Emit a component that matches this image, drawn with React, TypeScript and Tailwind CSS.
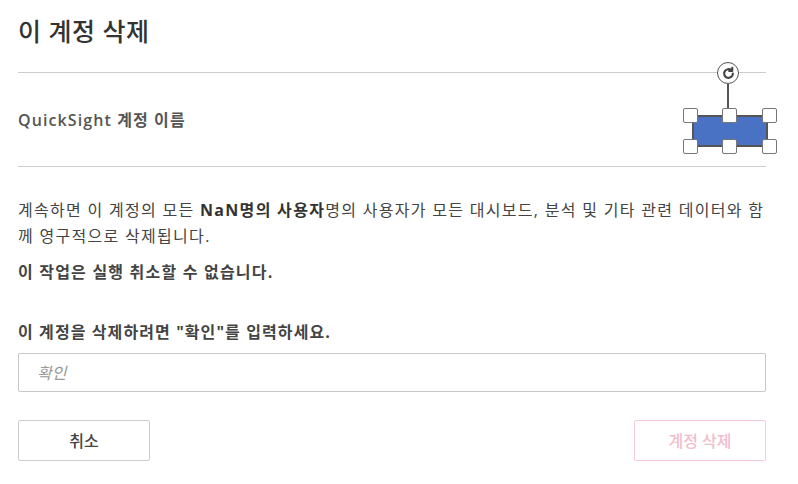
import React from 'react';

const font = { fontFamily: '"Open Sans", "Noto Sans CJK KR", sans-serif' };

const Handle: React.FC<{ className: string }> = ({ className }) => (
  <div className={`absolute w-[15px] h-[15px] bg-white border border-[#777] rounded-[2px] ${className}`} />
);

// selected shape overlay (rotate knob + resize handles)
const ShapeWidget: React.FC = () => (
  <div className="absolute left-[683px] top-[62px] w-[94px] h-[92px]">
    <div className="absolute left-[34px] top-0 w-[22px] h-[22px] rounded-full bg-white border border-[#555] flex items-center justify-center">
      <svg width="15" height="15" viewBox="0 0 24 24" fill="none" stroke="#444" strokeWidth="3.4" strokeLinecap="round">
        <path d="M19 12a7 7 0 1 1-2.2-5.1" />
        <path d="M18 3v5h-5" strokeLinejoin="round" />
      </svg>
    </div>
    <div className="absolute left-[44px] top-[22px] w-[2px] h-[24px] bg-[#555]" />
    <div className="absolute left-[9px] top-[53px] w-[76px] h-[32px] bg-[#4a72c4] border-2 border-[#555]" />
    <Handle className="left-0 top-[46px]" />
    <Handle className="left-[39px] top-[46px]" />
    <Handle className="left-[79px] top-[46px]" />
    <Handle className="left-0 top-[77px]" />
    <Handle className="left-[39px] top-[77px]" />
    <Handle className="left-[79px] top-[77px]" />
  </div>
);

export default function App() {
  return (
    <div className="relative w-[798px] h-[484px] bg-white pl-[18px] pr-[32px] pt-[14px] text-[#444]" style={font}>
      <h1 className="text-[25px] leading-[34px] text-[#333] font-medium tracking-[0.5px]">이 계정 삭제</h1>
      <div className="mt-[24px] border-t border-[#ccc]" />
      <div className="h-[94px] flex items-center border-b border-[#ccc]">
        <span className="text-[16px] text-[#555] font-semibold tracking-[1.1px]">QuickSight 계정 이름</span>
      </div>
      <p className="mt-[30px] text-[16px] leading-[26px] text-[#444] tracking-[1.3px]">
        계속하면 이 계정의 모든 <span className="font-bold text-[#333]">NaN명의 사용자</span>명의 사용자가 모든 대시보드, 분석 및 기타 관련 데이터와 함께 영구적으로 삭제됩니다.
      </p>
      <p className="mt-[10px] text-[16px] leading-[26px] font-bold text-[#444] tracking-[1.2px]">이 작업은 실행 취소할 수 없습니다.</p>
      <p className="mt-[37px] text-[16px] leading-[20px] font-bold text-[#444] tracking-[1.1px]">이 계정을 삭제하려면 "확인"를 입력하세요.</p>
      <input
        className="mt-[11px] w-full h-[39px] border border-[#c8c8c8] rounded-[2px] px-[18px] text-[16px] italic placeholder:text-[#999] outline-none"
        placeholder="확인"
        style={font}
      />
      <div className="mt-[28px] flex justify-between">
        <button className="w-[132px] h-[41px] border border-[#ccc] rounded-[2px] bg-white text-[16px] font-medium text-[#444]" style={font}>
          취소
        </button>
        <button className="w-[132px] h-[41px] border border-[#f6cdd8] rounded-[2px] bg-white text-[16px] font-medium text-[#f2bccb]" style={font}>
          계정 삭제
        </button>
      </div>
      <ShapeWidget />
    </div>
  );
}
